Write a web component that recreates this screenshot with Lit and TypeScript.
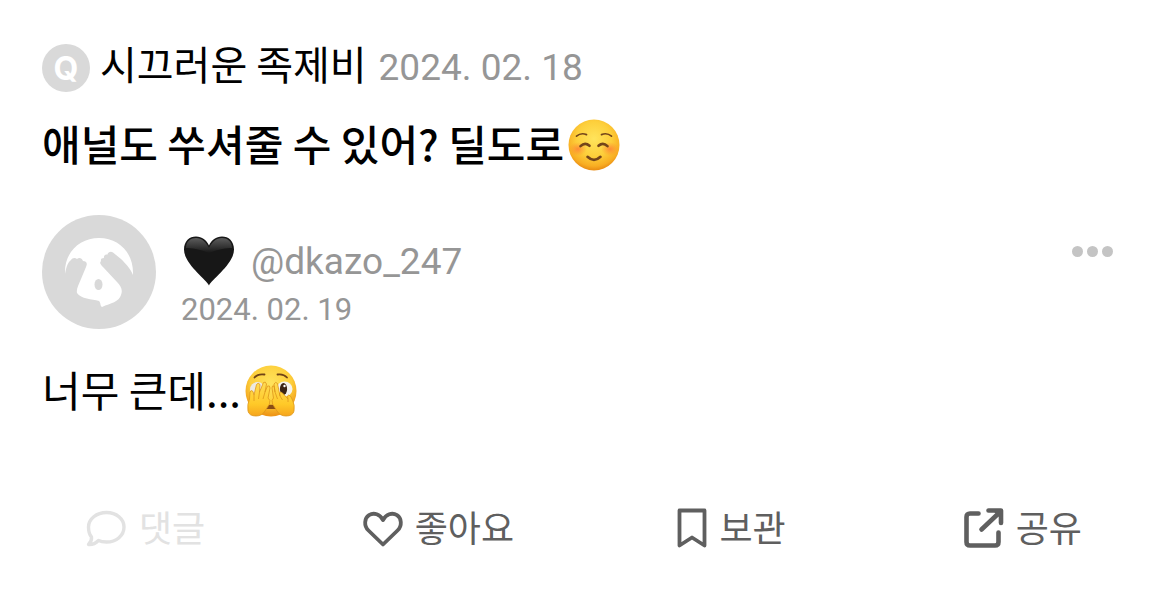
import { LitElement, html, css, svg } from "lit";
import { customElement, state } from "lit/decorators.js";

const smileEmoji = html`<svg class="emoji" viewBox="0 0 52 52" role="img" aria-label="☺️">
  <defs>
    <radialGradient id="face" cx="50%" cy="38%" r="62%">
      <stop offset="0" stop-color="#ffe45c" />
      <stop offset="0.55" stop-color="#fdcf3b" />
      <stop offset="0.86" stop-color="#f8ad22" />
      <stop offset="1" stop-color="#e88a12" />
    </radialGradient>
    <radialGradient id="blush">
      <stop offset="0" stop-color="#ff7638" stop-opacity="0.75" />
      <stop offset="1" stop-color="#ff8a30" stop-opacity="0" />
    </radialGradient>
  </defs>
  <circle cx="26" cy="26" r="25.5" fill="url(#face)" />
  <ellipse cx="10" cy="30" rx="9" ry="7" fill="url(#blush)" />
  <ellipse cx="42" cy="30" rx="9" ry="7" fill="url(#blush)" />
  <g fill="none" stroke="#74451a" stroke-linecap="round">
    <path d="M8.5 17.200Q13 13.300 18.500 15.600M33.500 15.600Q39 13.300 43.500 17.200" stroke-width="1.700" />
    <path d="M12.500 27.200Q17 22.600 21.500 26.800M30.500 26.800Q35 22.600 39.500 27.200" stroke-width="2.600" />
    <path d="M19.500 37.800Q26 44 32.500 37.800" stroke-width="2.600" />
  </g>
</svg>`;

const peekEmoji = html`<svg class="emoji" viewBox="0 0 52 52" role="img" aria-label="🫣">
  <defs>
    <radialGradient id="peek" cx="50%" cy="35%" r="62%">
      <stop offset="0" stop-color="#ffe35c" />
      <stop offset="0.65" stop-color="#fdce3a" />
      <stop offset="1" stop-color="#ef9718" />
    </radialGradient>
    <linearGradient id="hand" x1="0" y1="0" x2="0" y2="1">
      <stop offset="0" stop-color="#ffdc54" />
      <stop offset="0.65" stop-color="#ffc928" />
      <stop offset="1" stop-color="#f6a51d" />
    </linearGradient>
  </defs>
  <circle cx="26" cy="26" r="25.500" fill="url(#peek)" />
  <path d="M9.500 12.500Q13 8.500 19.500 9.500M32.500 9.500Q38.500 8.500 42 12.500" fill="none" stroke="#704316" stroke-width="1.800" stroke-linecap="round" />
  <ellipse cx="12.500" cy="24.500" rx="7.500" ry="7.500" fill="#ece9e2" />
  <ellipse cx="39.500" cy="24" rx="8" ry="7.500" fill="#f5f3ee" />
  <ellipse cx="38.500" cy="24" rx="3.600" ry="6" fill="#3b2415" />
  <circle cx="39.500" cy="21" r="1.200" fill="#fff" />
  <path d="M20 41Q26 38.500 32 41V44H20Z" fill="#8a4d15" />
  <g fill="url(#hand)" stroke="#dd951b" stroke-width="0.800" stroke-linejoin="round">
    <path d="M3 46Q2 39 4.500 34L5 27Q6 24.500 8 26.500L9 30L11.500 19.500Q13 17 15 19.500L14.500 27L18.500 17.500Q20.500 16 21.500 19L20 27L22.500 21Q25 20 25 23L23 33Q26 35 24.500 39L20 46Q17 51 11 51Q4 51 3 46Z" />
    <path d="M9 30V36M14.500 27L13.500 34M20 27L18 34" fill="none" />
    <path d="M49 46Q50 40 47.500 35L45.500 31Q43.500 29 42.500 31L43 34L37.500 28Q35.500 26 34.500 28L35 31L32.500 18.500Q30.500 16 29 19L30 27L29 21Q27 20 27 23L28.500 33Q26 35 27.500 39L32 46Q35 51 41 51Q48 51 49 46Z" />
    <path d="M30 27L32.500 34M35 31L37.500 35M43 34V37" fill="none" />
  </g>
</svg>`;

const blackHeart = html`<svg class="emoji" viewBox="0 0 52 52" role="img" aria-label="🖤">
  <defs>
    <linearGradient id="gloss" x1="0" y1="0" x2="0" y2="1">
      <stop offset="0" stop-color="#6e6e6e" />
      <stop offset="1" stop-color="#171717" />
    </linearGradient>
  </defs>
  <path d="M26 50.500C23 44 1 29 1 14.500C1 6 6.500 1.500 13 1.500C19 1.500 23.500 5 26 10.500C28.500 5 33 1.500 39 1.500C45.500 1.500 51 6 51 14.500C51 29 29 44 26 50.500Z" fill="#171717" />
  <path d="M3 13C3 6 8 3 13 3C19 3 23 7 26 13C29 7 33 3 39 3C44 3 49 6 49 13C44 13 35 14 26 18C17 14 8 13 3 13Z" fill="url(#gloss)" opacity="0.800" />
</svg>`;

const pandaAvatar = html`<svg class="avatar" viewBox="0 0 114 114" aria-hidden="true">
  <circle cx="57" cy="57" r="57" fill="#d9d9d9" />
  <path
    d="M23 59C22 37 38 23 57 23C77 23 92 38 91 60C88 53 84 49 79 44L71 37.500C69 36 66 37 65.500 39.500C63 39 61.500 41 62 43C59.500 43 58.500 44 59 46C57 48 59 50 61 52L75 67C79 71 81 75 79 80C77 87 69 88 60 92C58 91 59 88 57 86C50 84 39 84 35 78C34 74 37 69 39 64L44 52C46 48 44 46 41 46C40 43 37 42 35 44C33 42 30 43 29 45C25 48 24 54 23 59Z"
    fill="#fff" />
  <ellipse cx="56.500" cy="69.500" rx="4" ry="5.500" fill="#d9d9d9" />
</svg>`;

const icons = {
  comment: svg`<path d="M19.500 5.500C29.500 5.500 37 12 37 20C37 28.500 29.500 35 19.500 35C16.500 35 13.500 34.500 11.500 33.500C8.500 36.500 5 37.800 1.500 37.500C3.500 35.500 5 33 4.500 30C2.200 27.500 1.500 24 1.500 20C1.500 12 9.500 5.500 19.500 5.500Z" stroke-width="3.400"/>`,
  heart: svg`<path d="M20 37.500L5.500 23.500C0.500 18.500 1.500 11 6 8.200C11 5 17 7.500 20 13C23 7.500 29 5 34 8.200C38.500 11 39.500 18.500 34.500 23.500Z" stroke-width="3.800"/>`,
  save: svg`<path d="M3.500 3.500H28.500V38.500L16 30.500L3.500 38.500Z" stroke-width="3.800"/>`,
  share: svg`<path d="M14.500 6.500H6Q2.500 6.500 2.500 10V35Q2.500 38.500 6 38.500H31Q34.500 38.500 34.500 35V25.500M17.500 22.500L36 5M24.500 3.500H37V16" stroke-width="4.600"/><path d="M28 3H38.500V13Z" fill="currentColor" stroke="none"/>`,
};

@customElement("app-root")
export class AppRoot extends LitElement {
  @state() private liked = false;
  @state() private saved = false;

  static styles = css`
    :host {
      display: block;
      background: #fff;
      color: #000;
      font-family: Roboto, "Noto Sans CJK KR", sans-serif;
    }
    .post { padding: 40px 0 48px; }
    .content { padding: 0 42px; }
    .asker {
      display: flex;
      align-items: center;
      gap: 10px;
      height: 52px;
    }
    .badge {
      display: grid;
      place-items: center;
      box-sizing: border-box;
      width: 48px;
      height: 48px;
      margin-top: 4px;
      padding-top: 2px;
      border-radius: 50%;
      background: #d9d9d9;
      color: #fff;
      font: 700 32px/46px Inter, sans-serif;
    }
    .byline {
      display: flex;
      align-items: baseline;
      gap: 12px;
      padding-bottom: 2px;
      font-size: 40px;
      line-height: 48px;
    }
    .nickname { font-family: "Noto Sans CJK KR", sans-serif; }
    .date { color: #969696; font-size: 37px; }
    .question, .answer {
      display: flex;
      align-items: center;
      gap: 4px;
      margin: 0;
      font-family: "Noto Sans CJK KR", sans-serif;
      font-size: 42px;
      line-height: 56px;
    }
    .question { margin-top: 23px; font-weight: 500; }
    .answer { margin-top: 28px; font-weight: 400; }
    .text { padding-bottom: 4px; }
    .emoji { display: block; flex: none; width: 52px; height: 52px; }
    .author {
      display: flex;
      align-items: flex-start;
      gap: 25px;
      margin-top: 40px;
    }
    .avatar { display: block; flex: none; width: 114px; height: 114px; }
    .identity { flex: 1; padding-top: 20px; }
    .name {
      display: flex;
      align-items: center;
      gap: 16px;
      height: 52px;
      color: #969696;
      font-size: 37px;
      padding-left: 2px;
    }
    .name a { color: inherit; text-decoration: none; }
    .answered { display: block; color: #969696; font-size: 31px; line-height: 46px; }
    button {
      border: 0;
      padding: 0;
      background: none;
      color: #5f5f5f;
      font: inherit;
      cursor: pointer;
    }
    .more {
      display: flex;
      gap: 4px;
      padding: 31px 14px;
    }
    .dot { width: 11px; height: 11px; border-radius: 50%; background: #c4c4c4; }
    .actions {
      display: grid;
      grid-template-columns: repeat(4, 1fr);
      margin-top: 77px;
    }
    .action {
      display: flex;
      align-items: center;
      justify-content: center;
      gap: 12px;
      height: 60px;
      font-family: "Noto Sans CJK KR", sans-serif;
      font-size: 36px;
      line-height: 56px;
    }
    .action:disabled { color: #e2e2e2; cursor: default; }
    .icon {
      flex: none;
      width: 40px;
      height: 42px;
      fill: none;
      stroke: currentColor;
      stroke-linecap: round;
      stroke-linejoin: round;
      overflow: visible;
    }
    .narrow { width: 32px; }
  `;

  render() {
    return html`
      <article class="post">
        <div class="content">
          <div class="asker">
            <span class="badge">Q</span>
            <div class="byline">
              <span class="nickname">시끄러운 족제비</span>
              <time class="date" datetime="2024-02-18">2024. 02. 18</time>
            </div>
          </div>
          <h1 class="question"><span class="text">애널도 쑤셔줄 수 있어? 딜도로</span>${smileEmoji}</h1>
          <div class="author">
            ${pandaAvatar}
            <div class="identity">
              <div class="name">${blackHeart}<a href="#dkazo_247">@dkazo_247</a></div>
              <time class="answered" datetime="2024-02-19">2024. 02. 19</time>
            </div>
            <button class="more" type="button" aria-label="더보기">
              <span class="dot"></span><span class="dot"></span><span class="dot"></span>
            </button>
          </div>
          <p class="answer"><span class="text">너무 큰데...</span>${peekEmoji}</p>
        </div>
        <div class="actions">
          <button class="action" type="button" disabled>
            <svg class="icon" viewBox="0 0 40 42" aria-hidden="true">${icons.comment}</svg>
            <span class="text">댓글</span>
          </button>
          <button class="action" type="button" aria-pressed=${this.liked} @click=${() => (this.liked = !this.liked)}>
            <svg class="icon" viewBox="0 0 40 42" aria-hidden="true">${icons.heart}</svg>
            <span class="text">좋아요</span>
          </button>
          <button class="action" type="button" aria-pressed=${this.saved} @click=${() => (this.saved = !this.saved)}>
            <svg class="icon narrow" viewBox="0 0 32 42" aria-hidden="true">${icons.save}</svg>
            <span class="text">보관</span>
          </button>
          <button class="action" type="button">
            <svg class="icon" viewBox="0 0 40 42" aria-hidden="true">${icons.share}</svg>
            <span class="text">공유</span>
          </button>
        </div>
      </article>
    `;
  }
}
